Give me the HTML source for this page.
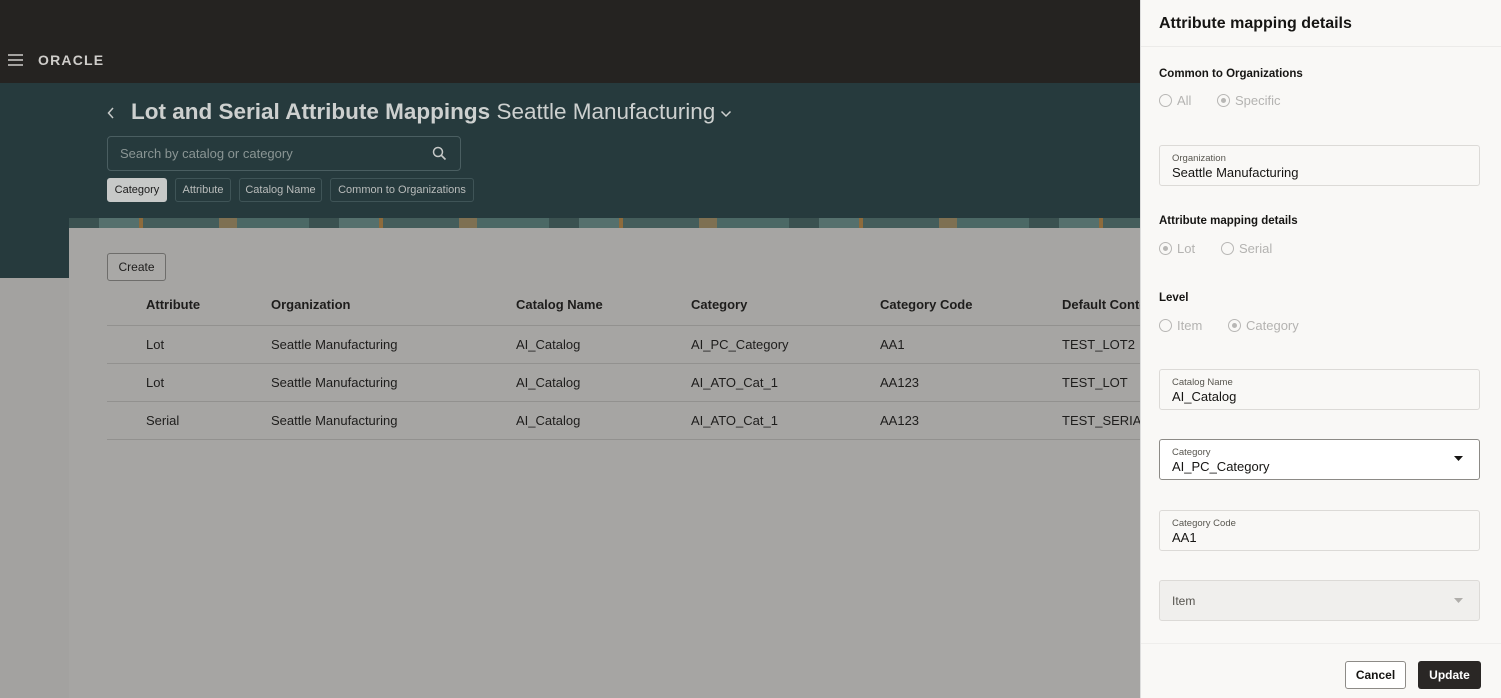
<!DOCTYPE html>
<html><head><meta charset="utf-8"><style>
*{box-sizing:border-box;margin:0;padding:0}
body{width:1501px;height:698px;overflow:hidden;font-family:"Liberation Sans",sans-serif;background:#a09f9d;position:relative}
.top{position:absolute;left:0;top:0;width:1501px;height:83px;background:#252321}
.hdr{position:absolute;left:0;top:83px;width:1501px;height:195px;background:#263a3d}
.left{position:absolute;left:0;top:278px;width:69px;height:420px;background:#a3a2a0}
.card{position:absolute;left:69px;top:218px;width:1080px;height:480px;background:#a6a5a3}
.strip{position:absolute;left:69px;top:218px;width:1080px;height:10px;background:
repeating-linear-gradient(90deg,#3a5150 0 30px,#55706d 30px 70px,#8d6b3c 70px 74px,#445d5b 74px 150px,#7e7052 150px 168px,#4b6865 168px 240px)}
.t{position:absolute;white-space:nowrap}
.chip{position:absolute;top:178px;height:24px;border:1px solid #3f5457;border-radius:3px;color:#b9bcbb;font-size:11px;line-height:22px;text-align:center;white-space:nowrap}
.th{position:absolute;top:297px;font-size:13px;font-weight:bold;color:#1e1d1c;white-space:nowrap}
.td{position:absolute;font-size:13px;color:#1e1d1c;white-space:nowrap}
.hl{position:absolute;left:107px;width:1042px;height:1px;background:#92918f}
.panel{position:absolute;left:1140px;top:0;width:361px;height:698px;background:#f9f8f6;border-left:1px solid #ddd}
.lbl{position:absolute;left:18px;font-size:11.5px;font-weight:bold;color:#161513}
.radio{position:absolute;font-size:13px;color:#b4b3b1}
.rc{display:inline-block;width:13px;height:13px;border:1px solid #b8b7b5;border-radius:50%;vertical-align:-2px;margin-right:5px;position:relative}
.rc.on::after{content:"";position:absolute;left:3px;top:3px;width:5px;height:5px;border-radius:50%;background:#b8b7b5}
.fld{position:absolute;left:18px;width:321px;height:41px;border:1px solid #dcdad7;border-radius:3px;background:#f9f8f6}
.fld .s{position:absolute;left:12px;top:7px;font-size:9.5px;color:#58564f}
.fld .v{position:absolute;left:12px;top:19px;font-size:13px;color:#161513}
</style></head><body>
<div class="top"></div>
<svg style="position:absolute;left:8px;top:54px" width="16" height="12"><path d="M0 1h15M0 6h15M0 11h15" stroke="#cfcdca" stroke-width="1.6"/></svg>
<div class="t" style="left:38px;top:52px;font-size:14px;letter-spacing:1.2px;color:#cfcdca;font-weight:bold">ORACLE</div>
<div class="hdr"></div>
<svg style="position:absolute;left:107px;top:106px" width="8" height="14"><path d="M6 2L1.5 7L6 12" stroke="#c6c9c8" stroke-width="1.5" fill="none"/></svg>
<div class="t" style="left:131px;top:99px;font-size:22.5px;color:#cdd0cf"><b>Lot and Serial Attribute Mappings</b> Seattle Manufacturing</div>
<svg style="position:absolute;left:720px;top:110px" width="12" height="8"><path d="M1.5 1.5L6 6L10.5 1.5" stroke="#cdd0cf" stroke-width="1.5" fill="none"/></svg>
<div style="position:absolute;left:107px;top:136px;width:354px;height:35px;border:1px solid #4a5e61;border-radius:4px"></div>
<div class="t" style="left:120px;top:146px;font-size:13px;color:#8a9594">Search by catalog or category</div>
<svg style="position:absolute;left:432px;top:146px" width="15" height="15"><circle cx="6" cy="6" r="4.5" stroke="#c6c9c8" stroke-width="1.5" fill="none"/><path d="M9.5 9.5L13.5 13.5" stroke="#c6c9c8" stroke-width="1.6"/></svg>
<div class="chip" style="left:107px;width:60px;background:#c7c9c8;color:#1c1c1c;border-color:#c7c9c8">Category</div>
<div class="chip" style="left:175px;width:56px">Attribute</div>
<div class="chip" style="left:239px;width:83px">Catalog Name</div>
<div class="chip" style="left:330px;width:144px">Common to Organizations</div>
<div class="left"></div>
<div class="card"></div>
<div class="strip"></div>
<div style="position:absolute;left:107px;top:253px;width:59px;height:28px;border:1px solid #6e6d6b;border-radius:3px;background:#a9a8a6;font-size:12px;line-height:26px;text-align:center;color:#1e1d1c">Create</div>
<div class="th" style="left:146px">Attribute</div>
<div class="th" style="left:271px">Organization</div>
<div class="th" style="left:516px">Catalog Name</div>
<div class="th" style="left:691px">Category</div>
<div class="th" style="left:880px">Category Code</div>
<div class="th" style="left:1062px;width:78px;overflow:hidden">Default Content</div>
<div class="hl" style="top:325px"></div>
<div class="hl" style="top:363px"></div>
<div class="hl" style="top:401px"></div>
<div class="hl" style="top:439px"></div>
<div class="td" style="left:146px;top:337px">Lot</div><div class="td" style="left:271px;top:337px">Seattle Manufacturing</div><div class="td" style="left:516px;top:337px">AI_Catalog</div><div class="td" style="left:691px;top:337px">AI_PC_Category</div><div class="td" style="left:880px;top:337px">AA1</div><div class="td" style="left:1062px;top:337px">TEST_LOT2</div>
<div class="td" style="left:146px;top:375px">Lot</div><div class="td" style="left:271px;top:375px">Seattle Manufacturing</div><div class="td" style="left:516px;top:375px">AI_Catalog</div><div class="td" style="left:691px;top:375px">AI_ATO_Cat_1</div><div class="td" style="left:880px;top:375px">AA123</div><div class="td" style="left:1062px;top:375px">TEST_LOT</div>
<div class="td" style="left:146px;top:413px">Serial</div><div class="td" style="left:271px;top:413px">Seattle Manufacturing</div><div class="td" style="left:516px;top:413px">AI_Catalog</div><div class="td" style="left:691px;top:413px">AI_ATO_Cat_1</div><div class="td" style="left:880px;top:413px">AA123</div><div class="td" style="left:1062px;top:413px;width:78px;overflow:hidden">TEST_SERIAL</div>

<div class="panel">
<div style="position:absolute;left:0;top:0;width:360px;height:47px;border-bottom:1px solid #ecebe9"></div>
<div class="t" style="left:18px;top:15px;font-size:16px;font-weight:bold;color:#161513">Attribute mapping details</div>
<div class="lbl" style="top:68px">Common to Organizations</div>
<div class="radio" style="left:18px;top:93px"><span class="rc"></span>All</div>
<div class="radio" style="left:76px;top:93px"><span class="rc on"></span>Specific</div>
<div class="fld" style="top:145px"><div class="s">Organization</div><div class="v">Seattle Manufacturing</div></div>
<div class="lbl" style="top:215px">Attribute mapping details</div>
<div class="radio" style="left:18px;top:241px"><span class="rc on"></span>Lot</div>
<div class="radio" style="left:80px;top:241px"><span class="rc"></span>Serial</div>
<div class="lbl" style="top:292px">Level</div>
<div class="radio" style="left:18px;top:318px"><span class="rc"></span>Item</div>
<div class="radio" style="left:87px;top:318px"><span class="rc on"></span>Category</div>
<div class="fld" style="top:369px"><div class="s">Catalog Name</div><div class="v">AI_Catalog</div></div>
<div class="fld" style="top:439px;background:#fff;border-color:#8c8a86"><div class="s">Category</div><div class="v">AI_PC_Category</div>
<svg style="position:absolute;left:294px;top:16px" width="10" height="6"><path d="M0 0h9L4.5 5z" fill="#161513"/></svg></div>
<div class="fld" style="top:510px"><div class="s">Category Code</div><div class="v">AA1</div></div>
<div class="fld" style="top:580px;background:#f0efed"><div class="v" style="top:13px;font-size:12px;color:#55534e">Item</div>
<svg style="position:absolute;left:294px;top:17px" width="10" height="6"><path d="M0 0h9L4.5 5z" fill="#b0aeab"/></svg></div>
<div style="position:absolute;left:0;top:643px;width:360px;height:1px;background:#efeeec"></div>
<div style="position:absolute;left:204px;top:661px;width:61px;height:28px;border:1px solid #8d8b87;border-radius:3px;background:#fff;font-size:12px;font-weight:bold;line-height:26px;text-align:center;color:#161513">Cancel</div>
<div style="position:absolute;left:277px;top:661px;width:63px;height:28px;border-radius:3px;background:#2a2725;font-size:12px;font-weight:bold;line-height:28px;text-align:center;color:#fff">Update</div>
</div>
</body></html>
